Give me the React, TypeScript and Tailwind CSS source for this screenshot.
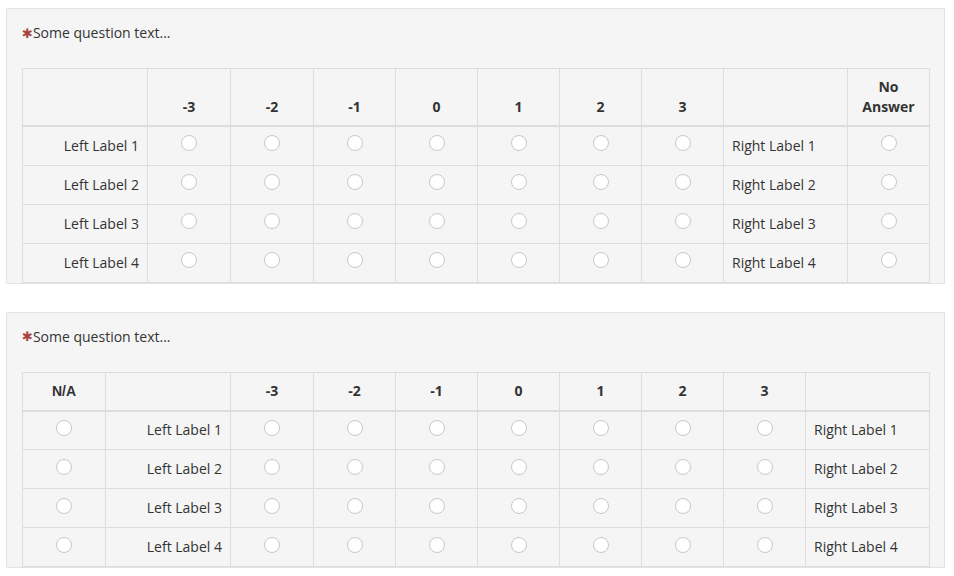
import React from "react";

const scale = ["-3", "-2", "-1", "0", "1", "2", "3"];
const rows = [1, 2, 3, 4];

function Radio() {
  return (
    <span className="mx-auto mb-[5px] block h-4 w-4 rounded-full border border-[#c8c8c8] bg-white" />
  );
}

function Question() {
  return (
    <div className="flex h-5 items-center leading-5 text-[14px] text-[#333]">
      <span className="text-[13px] leading-none text-[#a94442]" style={{ fontFamily: '"DejaVu Sans", sans-serif' }}>
        ✱
      </span>
      Some question text...
    </div>
  );
}

const th = "border border-[#ddd] border-b-2 px-2 py-2 text-center align-bottom font-bold leading-5";
const th2 = "border border-[#ddd] border-b-2 px-2 pt-2 pb-[9px] text-center align-bottom font-bold leading-5";
const td = "border border-[#ddd] h-[39px] px-2 py-0 align-middle leading-5";

function TableOne() {
  return (
    <table className="w-[907px] table-fixed border-collapse text-[14px] text-[#333]">
      <colgroup>
        <col className="w-[125px]" />
        <col className="w-[83px]" />
        <col className="w-[83px]" />
        <col className="w-[82px]" />
        <col className="w-[82px]" />
        <col className="w-[82px]" />
        <col className="w-[82px]" />
        <col className="w-[82px]" />
        <col className="w-[124px]" />
        <col className="w-[82px]" />
      </colgroup>
      <thead>
        <tr>
          <th className={th} />
          {scale.map((s) => (
            <th key={s} className={th}>
              {s}
            </th>
          ))}
          <th className={th} />
          <th className={th}>
            No
            <br />
            Answer
          </th>
        </tr>
      </thead>
      <tbody>
        {rows.map((r) => (
          <tr key={r}>
            <td className={`${td} text-right`}>Left Label {r}</td>
            {scale.map((s) => (
              <td key={s} className={td}>
                <Radio />
              </td>
            ))}
            <td className={`${td} text-left`}>Right Label {r}</td>
            <td className={td}>
              <Radio />
            </td>
          </tr>
        ))}
      </tbody>
    </table>
  );
}

function TableTwo() {
  return (
    <table className="w-[907px] table-fixed border-collapse text-[14px] text-[#333]">
      <colgroup>
        <col className="w-[83px]" />
        <col className="w-[125px]" />
        <col className="w-[83px]" />
        <col className="w-[82px]" />
        <col className="w-[82px]" />
        <col className="w-[82px]" />
        <col className="w-[82px]" />
        <col className="w-[82px]" />
        <col className="w-[82px]" />
        <col className="w-[124px]" />
      </colgroup>
      <thead>
        <tr>
          <th className={th2} style={{ fontFamily: '"Liberation Sans", Arial, sans-serif' }}>
            N/A
          </th>
          <th className={th2} />
          {scale.map((s) => (
            <th key={s} className={th2}>
              {s}
            </th>
          ))}
          <th className={th2} />
        </tr>
      </thead>
      <tbody>
        {rows.map((r) => (
          <tr key={r}>
            <td className={td}>
              <Radio />
            </td>
            <td className={`${td} text-right`}>Left Label {r}</td>
            {scale.map((s) => (
              <td key={s} className={td}>
                <Radio />
              </td>
            ))}
            <td className={`${td} text-left`}>Right Label {r}</td>
          </tr>
        ))}
      </tbody>
    </table>
  );
}

function Panel({ children }: { children: React.ReactNode }) {
  return (
    <div className="w-[939px] border border-[#e3e3e3] bg-[#f5f5f5] px-[15px] pt-[14px]">
      <Question />
      <div className="mt-[25px]">{children}</div>
    </div>
  );
}

export default function App() {
  return (
    <div
      className="min-h-[576px] bg-white pl-[6px] pt-[8px]"
      style={{ fontFamily: '"Open Sans", "Noto Sans", sans-serif' }}
    >
      <Panel>
        <TableOne />
      </Panel>
      <div className="mt-[28px]">
        <Panel>
          <TableTwo />
        </Panel>
      </div>
    </div>
  );
}
